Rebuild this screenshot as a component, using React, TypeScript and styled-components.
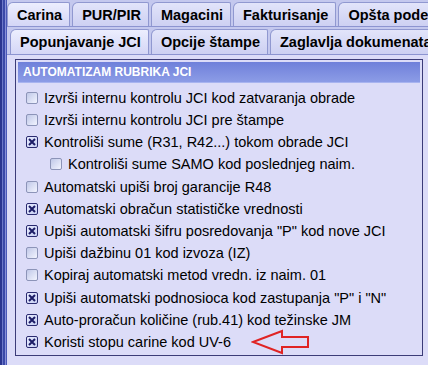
import React from 'react';
import styled, { createGlobalStyle } from 'styled-components';

const GlobalStyle = createGlobalStyle`
    html, body {
        margin: 0;
        padding: 0;
        background: #dcdcf8;
    }
    * {
        box-sizing: border-box;
    }
`;

const Window = styled.div`
    width: 428px;
    height: 365px;
    display: flex;
    overflow: hidden;
    font-family: 'Liberation Sans', Arial, sans-serif;
    background: #dcdcf8;
`;

const FrameEdge = styled.div`
    width: 7px;
    flex-shrink: 0;
    background: linear-gradient(
        to right,
        #2a3590 0px,
        #2a3590 2px,
        #6c78c8 2px,
        #6c78c8 3px,
        #3a48a8 3px,
        #3a48a8 5px,
        #8890d8 5px,
        #8890d8 6px,
        #4a58b8 6px
    );
`;

const Main = styled.div`
    flex: 1;
    display: flex;
    flex-direction: column;
    min-width: 0;
`;

const TabRow = styled.div<{ $indent: number }>`
    display: flex;
    gap: 2px;
    height: 28px;
    padding: 2px 0 0 ${(p) => p.$indent}px;
    background: #c4c8ee;
    border-bottom: 1px solid #8c94d0;
    white-space: nowrap;
    overflow: hidden;
`;

const Tab = styled.div<{ $active?: boolean }>`
    flex-shrink: 0;
    display: flex;
    align-items: center;
    padding: 0 7px 0 9px;
    font-size: 14.5px;
    font-weight: bold;
    color: #000;
    border: 1px solid #9098d0;
    border-bottom: none;
    border-top-left-radius: 6px;
    border-top-right-radius: 2px;
    background: ${(p) =>
        p.$active
            ? 'linear-gradient(#eceefe, #d4d6f6)'
            : 'linear-gradient(#e2e4fa, #cdd0f2)'};
`;

const Panel = styled.div`
    flex: 1;
    padding: 4px 5px 9px 8px;
    background: #dcdcf8;
`;

const GroupBox = styled.div`
    height: 100%;
    border: 1px solid #3c3c78;
    padding: 2px;
    display: flex;
    flex-direction: column;
`;

const GroupHeader = styled.div`
    height: 21px;
    display: flex;
    align-items: center;
    padding-left: 5px;
    color: #fff;
    font-size: 12px;
    font-weight: bold;
    background: linear-gradient(to bottom, #6f80da, #8c9ce6);
    border-bottom: 1px solid #a8b4f0;
`;

const OptionList = styled.div`
    display: flex;
    flex-direction: column;
    padding: 4px 0 0 8px;
`;

const OptionRow = styled.div<{ $level?: number }>`
    height: 22.2px;
    display: flex;
    align-items: center;
    gap: 6px;
    padding-left: ${(p) => (p.$level ?? 0) * 24}px;
    font-size: 14.5px;
    color: #000;
    white-space: nowrap;
`;

const Box = styled.span<{ $checked?: boolean }>`
    width: 12px;
    height: 12px;
    flex-shrink: 0;
    border-radius: 2px;
    border: 1px solid ${(p) => (p.$checked ? '#2a2a70' : '#8c94b8')};
    background: ${(p) =>
        p.$checked
            ? 'linear-gradient(135deg, #e8ecff, #c8d0f4)'
            : 'linear-gradient(135deg, #c0c8e8, #f2f4ff)'};
    display: flex;
    align-items: center;
    justify-content: center;
`;

const Arrow = styled.svg`
    margin-left: 14px;
    flex-shrink: 0;
`;

interface Option {
    label: string;
    checked: boolean;
    level?: number;
    marked?: boolean;
}

const options: Option[] = [
    { label: 'Izvrši internu kontrolu JCI kod zatvaranja obrade', checked: false },
    { label: 'Izvrši internu kontrolu JCI pre štampe', checked: false },
    { label: 'Kontroliši sume (R31, R42...) tokom obrade JCI', checked: true },
    { label: 'Kontroliši sume SAMO kod poslednjeg naim.', checked: false, level: 1 },
    { label: 'Automatski upiši broj garancije R48', checked: false },
    { label: 'Automatski obračun statističke vrednosti', checked: true },
    { label: 'Upiši automatski šifru posredovanja "P" kod nove JCI', checked: true },
    { label: 'Upiši dažbinu 01 kod izvoza (IZ)', checked: false },
    { label: 'Kopiraj automatski metod vredn. iz naim. 01', checked: false },
    { label: 'Upiši automatski podnosioca kod zastupanja "P" i "N"', checked: true },
    { label: 'Auto-proračun količine (rub.41) kod težinske JM', checked: true },
    { label: 'Koristi stopu carine kod UV-6', checked: true, marked: true },
];

const topTabs = ['Carina', 'PUR/PIR', 'Magacini', 'Fakturisanje', 'Opšta podešavanja'];
const subTabs = ['Popunjavanje JCI', 'Opcije štampe', 'Zaglavlja dokumenata'];

function CheckMark() {
    return (
        <svg width="8" height="8" viewBox="0 0 8 8">
            <path d="M1 1 L7 7 M7 1 L1 7" stroke="#1c1c66" strokeWidth="2" />
        </svg>
    );
}

export default function App() {
    return (
        <>
            <GlobalStyle />
            <Window>
                <FrameEdge />
                <Main>
                    <TabRow $indent={0}>
                        {topTabs.map((tab, index) => (
                            <Tab key={tab} $active={index === 0}>
                                {tab}
                            </Tab>
                        ))}
                    </TabRow>
                    <TabRow $indent={3}>
                        {subTabs.map((tab, index) => (
                            <Tab key={tab} $active={index === 0}>
                                {tab}
                            </Tab>
                        ))}
                    </TabRow>
                    <Panel>
                        <GroupBox>
                            <GroupHeader>AUTOMATIZAM RUBRIKA JCI</GroupHeader>
                            <OptionList>
                                {options.map((option) => (
                                    <OptionRow key={option.label} $level={option.level}>
                                        <Box $checked={option.checked}>{option.checked && <CheckMark />}</Box>
                                        {option.label}
                                        {option.marked && (
                                            <Arrow width="60" height="26" viewBox="0 0 60 26">
                                                <path
                                                    d="M2 13 L31 2 L31 8 L57 8 L57 18 L31 18 L31 24 Z"
                                                    fill="none"
                                                    stroke="#e02424"
                                                    strokeWidth="2"
                                                    strokeLinejoin="miter"
                                                />
                                            </Arrow>
                                        )}
                                    </OptionRow>
                                ))}
                            </OptionList>
                        </GroupBox>
                    </Panel>
                </Main>
            </Window>
        </>
    );
}
